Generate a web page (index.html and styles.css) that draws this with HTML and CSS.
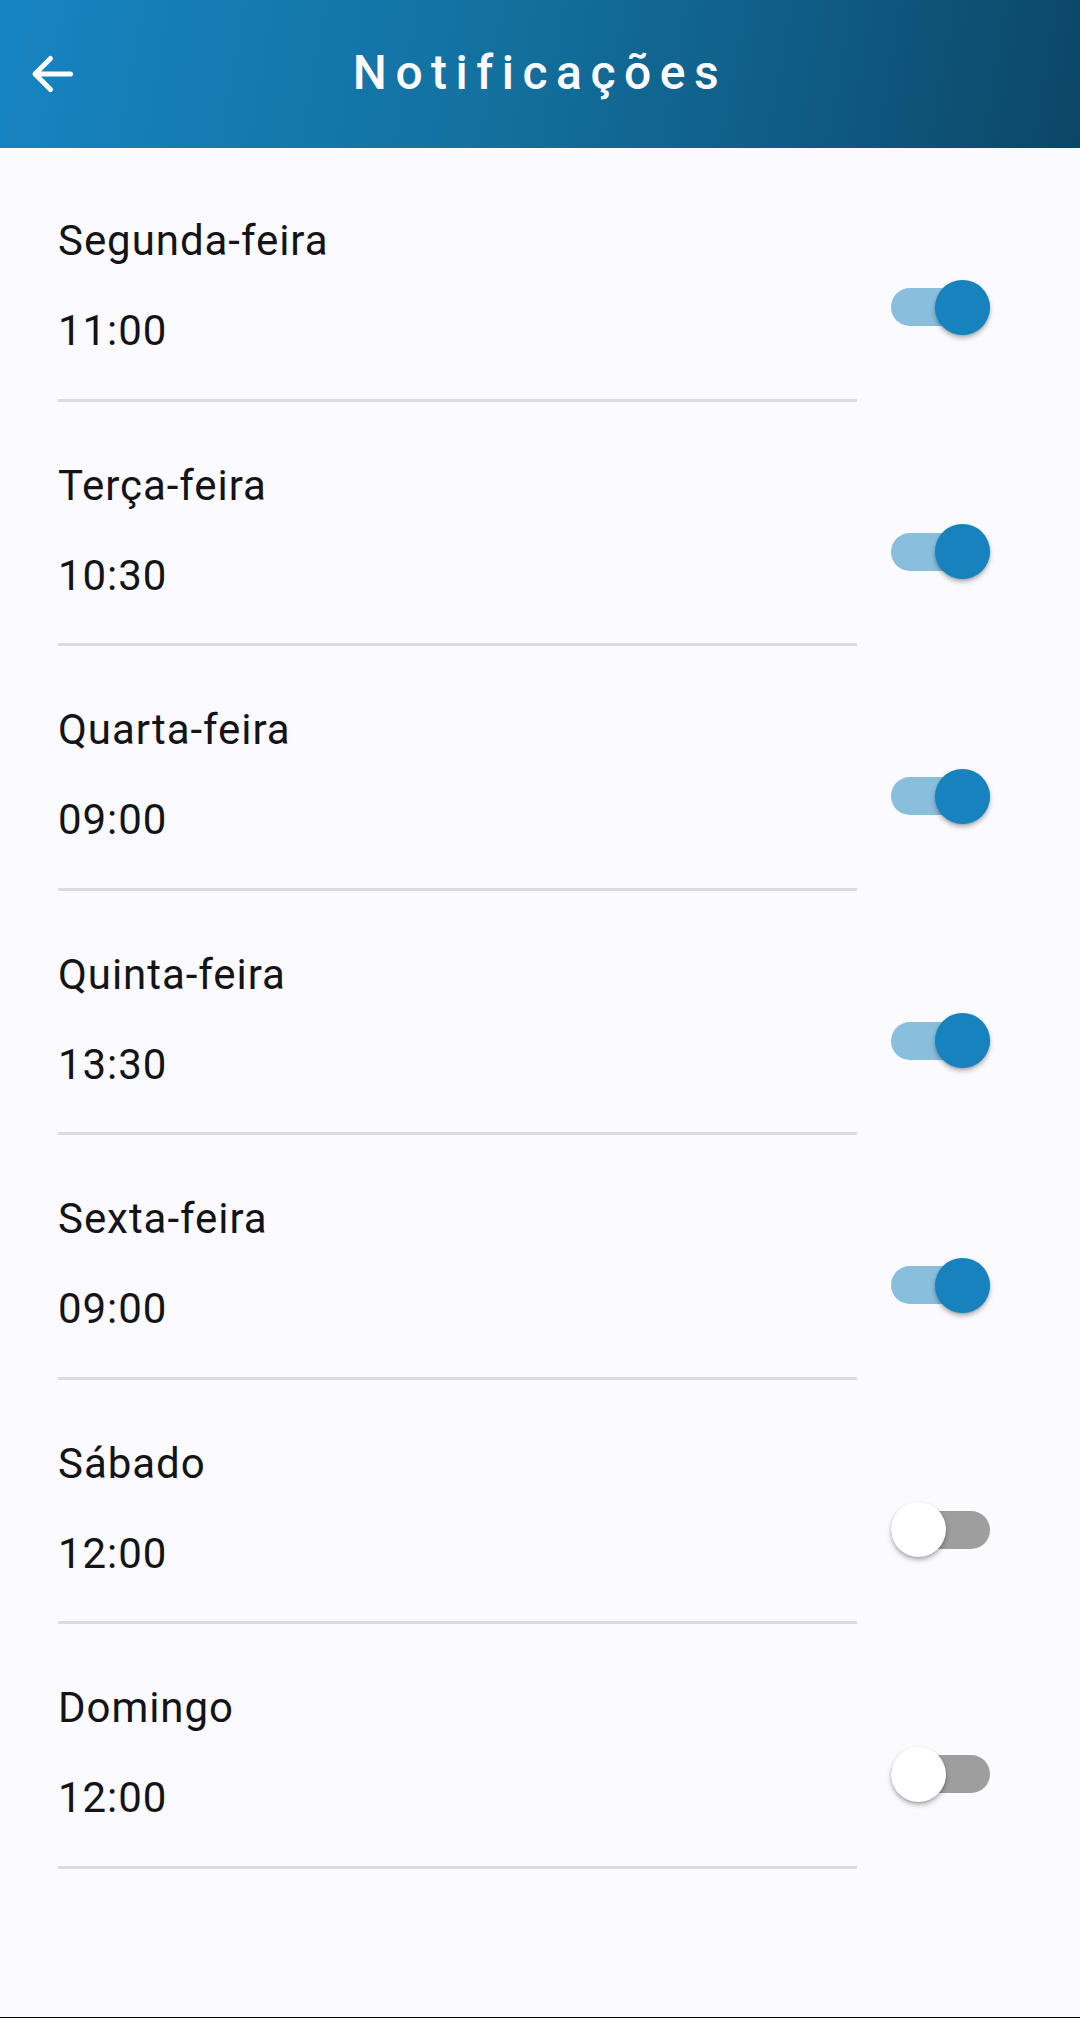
FILE: index.html
```html
<!DOCTYPE html>
<html lang="pt">
<head>
<meta charset="utf-8">
<title>Notificações</title>
<link rel="stylesheet" href="styles.css">
</head>
<body>
<div class="page">
  <header class="appbar">
    <div class="appbar-left">
      <svg class="back" width="44" height="42" viewBox="0 0 44 42" aria-hidden="true">
        <path d="M40.5 21H5.5M20.5 5.5L5 21l15.5 15.5" fill="none" stroke="#fff" stroke-width="5" stroke-linecap="round" stroke-linejoin="round"/>
      </svg>
    </div>
    <h1 class="title">Notificações</h1>
    <div class="appbar-right"></div>
  </header>

  <main class="list">
    <div class="row">
      <div class="info"><span class="day">Segunda-feira</span><span class="time">11:00</span></div>
      <div class="switch on"><span class="track"></span><span class="thumb"></span></div>
    </div>
    <div class="row">
      <div class="info"><span class="day">Terça-feira</span><span class="time">10:30</span></div>
      <div class="switch on"><span class="track"></span><span class="thumb"></span></div>
    </div>
    <div class="row">
      <div class="info"><span class="day">Quarta-feira</span><span class="time">09:00</span></div>
      <div class="switch on"><span class="track"></span><span class="thumb"></span></div>
    </div>
    <div class="row">
      <div class="info"><span class="day">Quinta-feira</span><span class="time">13:30</span></div>
      <div class="switch on"><span class="track"></span><span class="thumb"></span></div>
    </div>
    <div class="row">
      <div class="info"><span class="day">Sexta-feira</span><span class="time">09:00</span></div>
      <div class="switch on"><span class="track"></span><span class="thumb"></span></div>
    </div>
    <div class="row">
      <div class="info"><span class="day">Sábado</span><span class="time">12:00</span></div>
      <div class="switch off"><span class="track"></span><span class="thumb"></span></div>
    </div>
    <div class="row">
      <div class="info"><span class="day">Domingo</span><span class="time">12:00</span></div>
      <div class="switch off"><span class="track"></span><span class="thumb"></span></div>
    </div>
  </main>
  <div class="bottom-edge"></div>
</div>
</body>
</html>
```

FILE: styles.css
```css
* { box-sizing: border-box; }

html, body {
  margin: 0;
  padding: 0;
  background: #fbfaff;
}

body {
  font-family: Roboto, "Noto Sans", "Liberation Sans", sans-serif;
  color: #141417;
}

.page {
  min-height: 2018px;
  display: flex;
  flex-direction: column;
}

.appbar {
  height: 148px;
  display: grid;
  grid-template-columns: 1fr auto 1fr;
  align-items: center;
  background: linear-gradient(100deg, #1684c2 0%, #13719f 45%, #0f5b84 75%, #0c4666 100%);
  color: #fff;
}

.appbar-left {
  display: flex;
  align-items: center;
  padding-left: 30px;
}

.back { display: block; }

.title {
  margin: 0;
  font-size: 48px;
  font-weight: 500;
  letter-spacing: 8.5px;
  line-height: 56px;
  color: #fbfaff;
  padding-bottom: 2px;
}

.list {
  flex: 1;
  padding-top: 9px;
  display: flex;
  flex-direction: column;
}

.row {
  display: flex;
  align-items: flex-start;
  padding-left: 58px;
}

.info {
  width: 799px;
  display: flex;
  flex-direction: column;
  gap: 41px;
  padding-top: 59px;
  padding-bottom: 43.5px;
  border-bottom: 3px solid #dcdbe0;
}

.day, .time {
  font-size: 42px;
  line-height: 49px;
  font-weight: 400;
  letter-spacing: 0.95px;
}

.switch {
  position: relative;
  width: 99px;
  height: 55px;
  margin-left: 34px;
  margin-top: 122.5px;
}

.track {
  position: absolute;
  left: 0;
  right: 0;
  top: 8.5px;
  height: 38px;
  border-radius: 19px;
}

.thumb {
  position: absolute;
  top: 0;
  width: 55px;
  height: 55px;
  border-radius: 50%;
  box-shadow: 0 3px 5px rgba(0, 0, 0, 0.28), 0 1px 2px rgba(0, 0, 0, 0.12);
}

.switch.on .track { background: #89bedc; }
.switch.on .thumb { right: 0; background: #1682be; }

.switch.off .track { background: #9e9e9e; }
.switch.off .thumb { left: 0; background: #ffffff; }

.bottom-edge {
  height: 1px;
  background: #000;
}
```
